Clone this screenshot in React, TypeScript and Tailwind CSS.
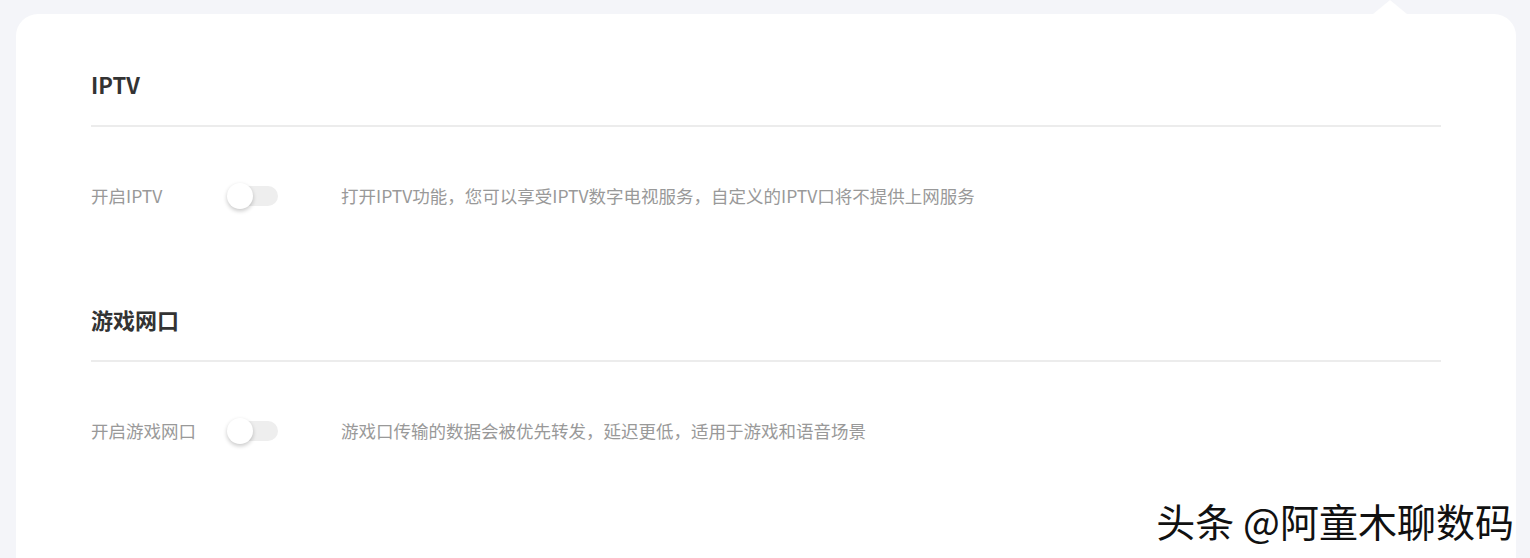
import { useState } from 'react'

// 开关组件
function Toggle({ on, onChange }: { on: boolean; onChange: (v: boolean) => void }): JSX.Element {
  return (
    <button
      type="button"
      onClick={() => onChange(!on)}
      className={`relative h-[20px] w-[50px] shrink-0 rounded-full ${on ? 'bg-[#4a90ff]' : 'bg-[#eeeeee]'}`}
    >
      <span
        className={`absolute top-1/2 h-[26px] w-[26px] -translate-y-1/2 rounded-full bg-white shadow-[0_2px_4px_rgba(0,0,0,0.22)] ${on ? 'left-[26px]' : '-left-[1px]'}`}
      />
    </button>
  )
}

function Section({
  title,
  label,
  desc
}: {
  title: string
  label: string
  desc: string
}): JSX.Element {
  const [on, setOn] = useState(false)
  return (
    <section className="flex flex-col">
      <h2 className="h-[30px] text-[22px] leading-[30px] font-bold text-[#333333]">{title}</h2>
      <div className="mt-[26px] h-[2px] bg-[#ececec]" />
      <div className="mt-[55px] flex h-[28px] items-center">
        <span className="w-[137px] shrink-0 text-[17.5px] text-[#999999]">{label}</span>
        <Toggle on={on} onChange={setOn} />
        <span className="ml-[63px] text-[17.5px] text-[#999999]">{desc}</span>
      </div>
    </section>
  )
}

function App(): JSX.Element {
  return (
    <div
      className="relative h-[558px] overflow-hidden bg-[#f4f5f9] pt-[14px] pr-[14px] pl-[16px]"
      style={{ fontFamily: '"Noto Sans CJK SC", "Noto Sans", sans-serif' }}
    >
      <div className="relative flex h-[600px] flex-col gap-[94px] rounded-[22px] bg-white px-[75px] pt-[55px]">
        {/* 顶部小三角 */}
        <div className="absolute -top-[14px] left-[1357px] h-0 w-0 border-x-[17px] border-b-[14px] border-x-transparent border-b-white" />
        <Section
          title="IPTV"
          label="开启IPTV"
          desc="打开IPTV功能，您可以享受IPTV数字电视服务，自定义的IPTV口将不提供上网服务"
        />
        <Section
          title="游戏网口"
          label="开启游戏网口"
          desc="游戏口传输的数据会被优先转发，延迟更低，适用于游戏和语音场景"
        />
      </div>
      {/* 水印 */}
      <div className="absolute top-[494px] right-[16px] text-[39px] leading-[52px] text-[#111111] [text-shadow:2px_2px_0_#ffffff,-1px_0_0_#ffffff]">
        头条 @阿童木聊数码
      </div>
    </div>
  )
}

export default App
